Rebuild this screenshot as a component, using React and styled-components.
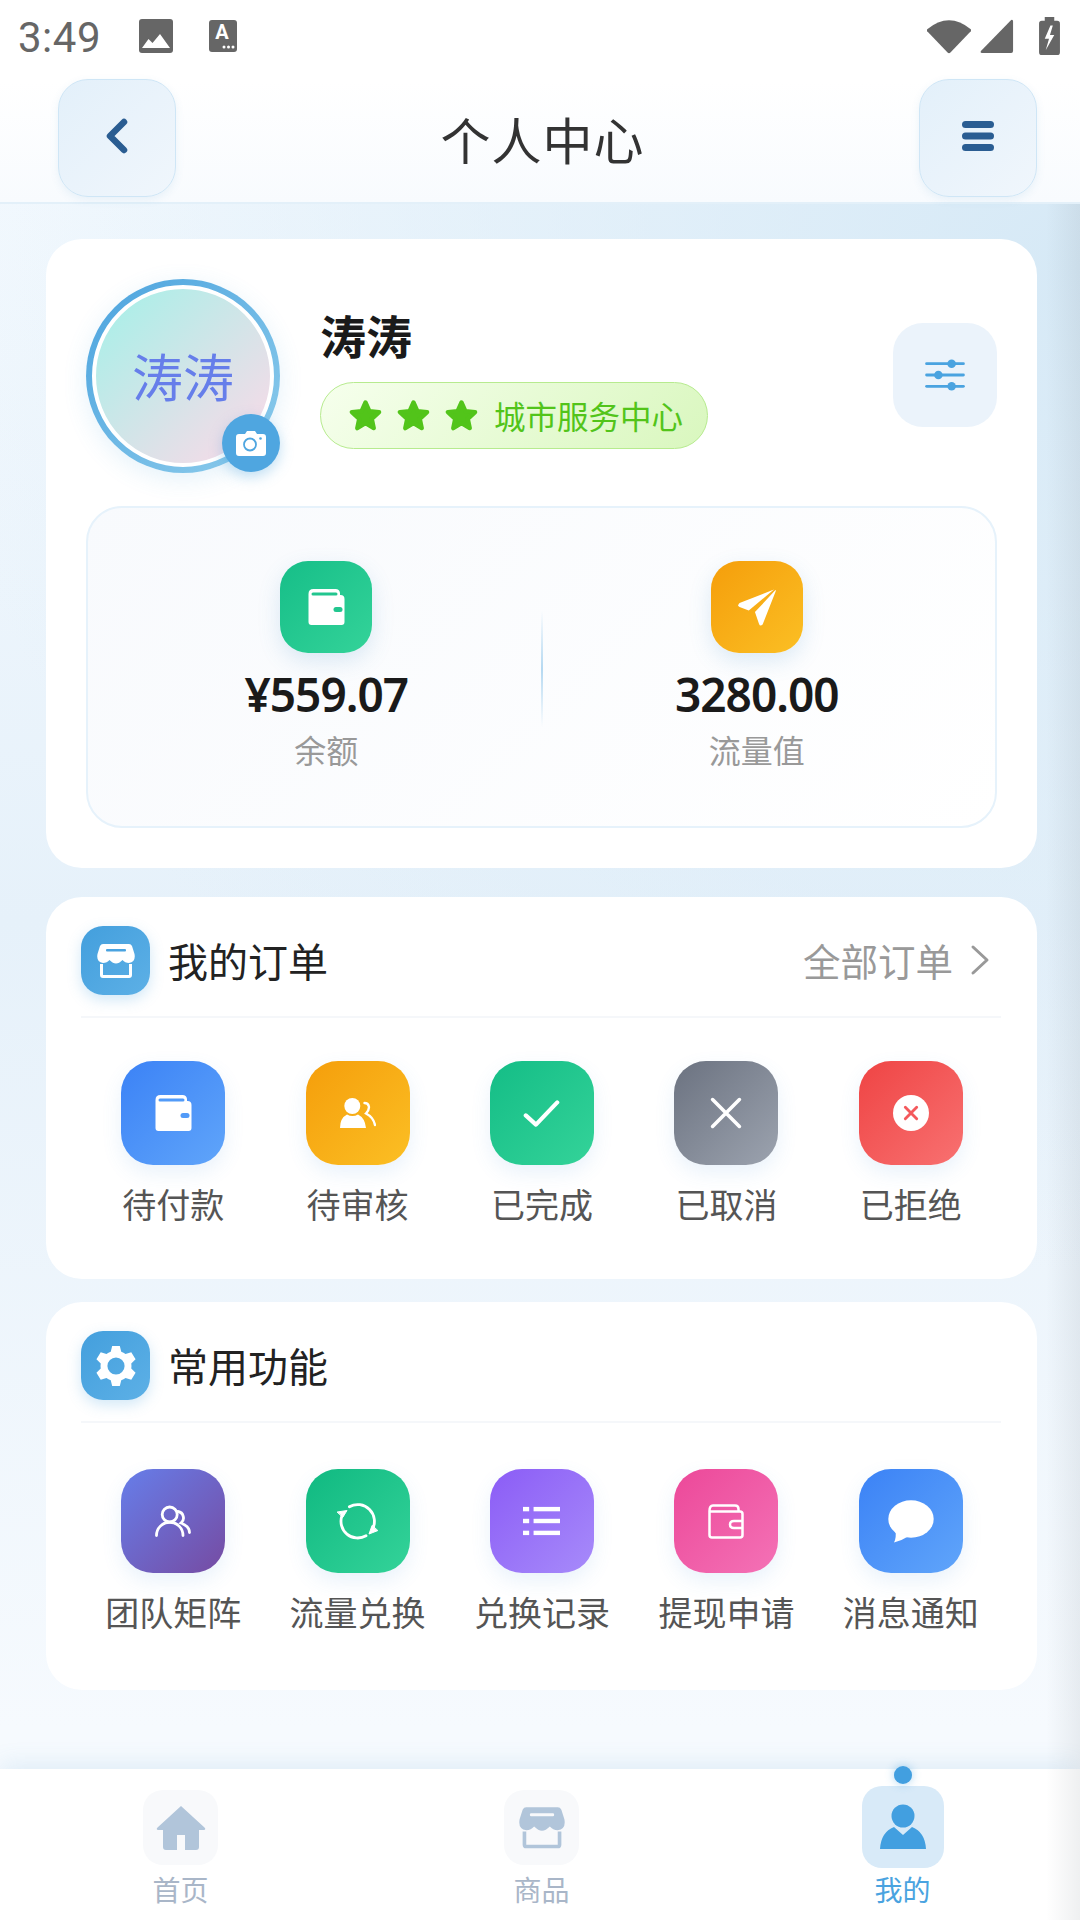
import React from 'react';
import styled, { createGlobalStyle } from 'styled-components';

const GlobalStyle = createGlobalStyle`
    html, body {
        margin: 0;
        padding: 0;
        background: #fff;
    }
    * {
        box-sizing: border-box;
    }
`;

const CJK = `"Noto Sans CJK SC", "Noto Sans", sans-serif`;

const Page = styled.div`
    position: relative;
    width: 1080px;
    height: 1920px;
    display: flex;
    flex-direction: column;
    overflow: hidden;
    font-family: ${CJK};
    background:
        radial-gradient(ellipse 1150px 1000px at 100% 14%, #d6e9f6 0%, rgba(214, 233, 246, 0) 100%),
        linear-gradient(180deg, #f3f9fe 10%, #e6f1fa 48%, #f6fafe 90%);
`;

const EdgeShade = styled.div`
    position: absolute;
    top: 204px;
    right: 0;
    bottom: 0;
    width: 34px;
    background: linear-gradient(90deg, rgba(120, 130, 140, 0) 0%, rgba(120, 130, 140, 0.12) 100%);
    pointer-events: none;
`;

const TopArea = styled.div`
    height: 204px;
    flex-shrink: 0;
    background: linear-gradient(180deg, #ffffff 0%, #ffffff 40%, #f8fbfe 100%);
    border-bottom: 2px solid #e3f0f9;
`;

const StatusBar = styled.div`
    height: 75px;
    display: flex;
    align-items: center;
    padding: 0 19px 3px 18px;
    color: #666;
`;

const Time = styled.span`
    font-family: Roboto, sans-serif;
    font-size: 42px;
    letter-spacing: 0.5px;
    margin: 2px 2px 0 0;
`;

const StatusLeft = styled.div`
    display: flex;
    align-items: center;
    gap: 36px;
    flex: 1;
`;

const StatusRight = styled.div`
    display: flex;
    align-items: center;
    gap: 8px;

    svg:last-child {
        margin-left: 16px;
    }
`;

const HeaderRow = styled.div`
    height: 118px;
    padding: 0 43px 0 58px;
    margin-top: 4px;
    display: flex;
    align-items: center;
    justify-content: space-between;
`;

const HeaderBtn = styled.div`
    width: 118px;
    height: 118px;
    padding-bottom: 4px;
    border-radius: 30px;
    border: 1px solid #cfe6f6;
    background: linear-gradient(135deg, #e3f0fa 0%, #f0f6fc 100%);
    box-shadow: 0 3px 8px rgba(74, 144, 200, 0.1);
    display: flex;
    align-items: center;
    justify-content: center;
`;

const Title = styled.h1`
    margin: 0;
    padding-right: 10px;
    font-size: 50px;
    font-weight: 400;
    color: #333;
    letter-spacing: 1px;
`;

const Content = styled.div`
    flex: 1;
    padding: 35px 43px 0 46px;
    display: flex;
    flex-direction: column;
`;

const Card = styled.div`
    background: #fff;
    border-radius: 36px;
    margin-bottom: ${p => p.$gap || 0}px;
`;

const ProfileCard = styled(Card)`
    height: 629px;
    padding: 40px;
`;

const ProfileRow = styled.div`
    display: flex;
    align-items: center;
    height: 194px;
`;

const Avatar = styled.div`
    position: relative;
    width: 194px;
    height: 194px;
    flex-shrink: 0;
    border-radius: 50%;
    padding: 6px;
    background: linear-gradient(135deg, #4ba3de 0%, #8fcdec 100%);
    box-shadow: 0 6px 24px rgba(74, 163, 222, 0.14);
    margin-right: 40px;
`;

const AvatarInner = styled.div`
    width: 100%;
    height: 100%;
    padding-bottom: 2px;
    border-radius: 50%;
    border: 4px solid #fff;
    background: linear-gradient(135deg, #aeeee8 12%, #eedde8 82%);
    display: flex;
    align-items: center;
    justify-content: center;
    font-size: 51px;
    color: #667eea;
`;

const CameraBadge = styled.div`
    position: absolute;
    right: 0;
    bottom: 1px;
    width: 58px;
    height: 58px;
    border-radius: 50%;
    background: #4fa6e0;
    box-shadow: 0 5px 14px rgba(74, 163, 222, 0.35);
    display: flex;
    align-items: center;
    justify-content: center;
`;

const ProfileInfo = styled.div`
    flex: 1;
    display: flex;
    flex-direction: column;
    align-items: flex-start;
    gap: 18px;
`;

const Name = styled.div`
    font-size: 46px;
    font-weight: 700;
    line-height: 60px;
    color: #1a1a1a;
`;

const LevelPill = styled.div`
    width: 388px;
    height: 67px;
    border-radius: 34px;
    border: 1px solid #b7eb8f;
    background: linear-gradient(135deg, #f6ffed 0%, #d9f7be 100%);
    display: flex;
    align-items: center;
    padding-left: 28px;
    gap: 16px;
    color: #52c41a;
    font-size: 31.500px;
`;

const Stars = styled.div`
    display: flex;
    gap: 15px;
`;

const SettingsBtn = styled.div`
    width: 104px;
    height: 104px;
    margin-bottom: 2px;
    border-radius: 30px;
    background: #ebf3fb;
    display: flex;
    align-items: center;
    justify-content: center;
`;

const StatBox = styled.div`
    height: 322px;
    margin-top: 33px;
    border: 2px solid #e6f2fb;
    border-radius: 36px;
    background: linear-gradient(135deg, #f8fafd 0%, #ffffff 100%);
    display: flex;
    align-items: stretch;
    padding: 53px 24px 0;
`;

const Stat = styled.div`
    flex: 1;
    display: flex;
    flex-direction: column;
    align-items: center;
`;

const StatIcon = styled.div`
    width: 92px;
    height: 92px;
    border-radius: 28px;
    background: ${p => p.$bg};
    box-shadow: 0 8px 22px rgba(74, 144, 200, 0.18);
    display: flex;
    align-items: center;
    justify-content: center;
`;

const Amount = styled.div`
    margin-top: 11px;
    font-family: "Noto Sans", sans-serif;
    font-size: 46px;
    line-height: 60px;
    font-weight: 600;
    color: #1a1a1a;
    letter-spacing: -1px;
`;

const StatLabel = styled.div`
    margin-top: 3px;
    font-size: 32px;
    line-height: 44px;
    color: #999;
`;

const StatDivider = styled.div`
    width: 2px;
    height: 116px;
    margin-top: 50px;
    background: linear-gradient(180deg, rgba(74, 163, 222, 0), rgba(74, 163, 222, 0.4), rgba(74, 163, 222, 0));
`;

const SectionCard = styled(Card)`
    height: ${p => p.$h}px;
    padding: 29px 36px 0 35px;
`;

const SectionHead = styled.div`
    height: 92px;
    display: flex;
    align-items: flex-start;
    border-bottom: 2px solid #f5f7fa;
`;

const SectionIcon = styled.div`
    width: 69px;
    height: 69px;
    border-radius: 22px;
    background: linear-gradient(135deg, #439fdd 0%, #5db0e6 100%);
    box-shadow: 0 5px 14px rgba(74, 163, 222, 0.25);
    display: flex;
    align-items: center;
    justify-content: center;
    margin-right: 18px;
`;

const SectionTitle = styled.div`
    flex: 1;
    font-size: 40px;
    line-height: 68px;
    color: #222;
`;

const AllLink = styled.div`
    display: flex;
    align-items: center;
    height: 67px;
    font-size: 37.500px;
    color: #999;
    gap: 17px;
    padding-right: 11px;
`;

const Grid = styled.div`
    display: grid;
    grid-template-columns: repeat(5, 1fr);
    margin-top: ${p => p.$top}px;
    margin-right: -2px;
`;

const GridItem = styled.div`
    display: flex;
    flex-direction: column;
    align-items: center;
`;

const GridIcon = styled.div`
    width: 104px;
    height: 104px;
    border-radius: 32px;
    background: ${p => p.$bg};
    box-shadow: 0 8px 20px rgba(74, 144, 220, 0.12);
    display: flex;
    align-items: center;
    justify-content: center;
`;

const GridLabel = styled.div`
    margin-top: 15px;
    font-size: 34px;
    line-height: 48px;
    color: #555;
    white-space: nowrap;
`;

const BottomNav = styled.div`
    position: relative;
    height: 151px;
    flex-shrink: 0;
    background: #fff;
    display: grid;
    grid-template-columns: repeat(3, 361px);
    box-shadow: 0 -6px 22px rgba(74, 144, 200, 0.12);
`;

const NavItem = styled.div`
    position: relative;
    display: flex;
    flex-direction: column;
    align-items: center;
    padding-top: ${p => (p.$active ? 17 : 21)}px;
`;

const NavIcon = styled.div`
    width: ${p => (p.$active ? 82 : 75)}px;
    height: ${p => (p.$active ? 82 : 75)}px;
    border-radius: 20px;
    background: ${p => (p.$active ? '#d8eaf8' : '#f8f9fb')};
    display: flex;
    align-items: center;
    justify-content: center;
`;

const NavLabel = styled.div`
    margin-top: ${p => (p.$active ? 1 : 4)}px;
    font-size: 28px;
    line-height: 40px;
    color: ${p => (p.$active ? '#4aa3e0' : '#a9b6c8')};
`;

const NavDot = styled.div`
    position: absolute;
    top: -3px;
    left: 50%;
    margin-left: -9px;
    width: 18px;
    height: 18px;
    border-radius: 50%;
    background: #429fe0;
    box-shadow: 0 0 10px rgba(66, 159, 224, 0.45);
`;

/* ---- icons ---- */

const ImageIcon = () => (
    <svg width="34" height="34" viewBox="0 0 34 34">
        <rect x="0" y="0" width="34" height="34" rx="3" fill="#666" />
        <path d="M3 29 L9.500 20 L13.500 24 L21 15 L31 29 Z" fill="#fff" />
    </svg>
);

const TextNote = () => (
    <svg width="28" height="32" viewBox="0 0 28 32">
        <rect x="0" y="0" width="28" height="32" rx="3" fill="#666" />
        <text x="13" y="19" fontFamily="Roboto, sans-serif" fontSize="20" fontWeight="700" fill="#fff" textAnchor="middle">A</text>
        <circle cx="15" cy="27" r="1.500" fill="#fff" />
        <circle cx="19.500" cy="27" r="1.500" fill="#fff" />
        <circle cx="24" cy="27" r="1.500" fill="#fff" />
    </svg>
);

const Wifi = () => (
    <svg width="46" height="36" viewBox="0 0 48 38">
        <path d="M1 12 Q24 -7 47 12 Q47.500 13 47 14 L25.500 36.500 Q24 38 22.500 36.500 L1 14 Q0.500 13 1 12 Z" fill="#666" />
    </svg>
);

const Signal = () => (
    <svg width="34" height="34" viewBox="0 0 36 36">
        <path d="M33 1 Q35 0 35 3 V34 Q35 36 33 36 H2 Q0 36 1 34 Z" fill="#666" />
    </svg>
);

const Battery = () => (
    <svg width="23" height="38" viewBox="0 0 22 40">
        <path d="M6 0 H16 V4 H19 Q22 4 22 7 V37 Q22 40 19 40 H3 Q0 40 0 37 V7 Q0 4 3 4 H6 Z" fill="#666" />
        <path d="M12 9 L6 23 H10.500 L7 35 L16 19 H11.500 L14.500 9 Z" fill="#fff" />
    </svg>
);

const BackChevron = () => (
    <svg width="24" height="36" viewBox="0 0 24 36">
        <path d="M19 4 L5 18 L19 32" fill="none" stroke="#2a5d92" strokeWidth="6.500" strokeLinecap="round" strokeLinejoin="round" />
    </svg>
);

const MenuBars = () => (
    <svg width="32" height="32" viewBox="0 0 32 32">
        <rect x="0" y="1" width="32" height="7" rx="3.500" fill="#2a5d92" />
        <rect x="0" y="12.500" width="32" height="7" rx="3.500" fill="#2a5d92" />
        <rect x="0" y="24" width="32" height="7" rx="3.500" fill="#2a5d92" />
    </svg>
);

const Camera = () => (
    <svg width="30" height="26" viewBox="0 0 30 26">
        <path d="M3 4 H9 L11 1 H19 L21 4 H27 Q30 4 30 7 V23 Q30 26 27 26 H3 Q0 26 0 23 V7 Q0 4 3 4 Z" fill="#fff" />
        <circle cx="14" cy="14.500" r="6" fill="none" stroke="#4fa6e0" strokeWidth="1.800" />
        <circle cx="24.500" cy="8.500" r="1.300" fill="#4fa6e0" />
    </svg>
);

const Star = () => (
    <svg width="33" height="32" viewBox="0 0 34 33">
        <path d="M17 3.500 L21 12.500 L31 13.500 L23.500 20.500 L25.500 30 L17 25 L8.500 30 L10.500 20.500 L3 13.500 L13 12.500 Z" fill="#52c41a" stroke="#52c41a" strokeWidth="4.500" strokeLinejoin="round" />
    </svg>
);

const Sliders = () => (
    <svg width="40" height="34" viewBox="0 0 42 36">
        <g stroke="#4aa3e0" strokeWidth="3" strokeLinecap="round">
            <line x1="1.500" y1="6" x2="40.500" y2="6" />
            <line x1="1.500" y1="18" x2="40.500" y2="18" />
            <line x1="1.500" y1="30" x2="40.500" y2="30" />
        </g>
        <circle cx="28" cy="6" r="4.500" fill="#4aa3e0" />
        <circle cx="14" cy="18" r="4.500" fill="#4aa3e0" />
        <circle cx="28" cy="30" r="4.500" fill="#4aa3e0" />
    </svg>
);

const WalletFill = ({ hole }) => (
    <svg width="37" height="36" viewBox="0 0 36 36">
        <path d="M0 5 Q0 0 5 0 H27 Q31 0 31.500 4 V6 H32 Q36 6 36 10 V33 Q36 36 33 36 H3 Q0 36 0 33 Z" fill="#fff" />
        <rect x="3" y="3.500" width="26" height="3" rx="1.500" fill={hole} />
        <rect x="25" y="18" width="9" height="5" rx="2.500" fill={hole} />
    </svg>
);

const Plane = () => (
    <svg width="38" height="37" viewBox="0 0 37 36">
        <path d="M35 0.500 L1.500 13.500 Q-1 16 1.500 17.500 L10.500 21 Z" fill="#fff" />
        <path d="M36.500 1 Q37 1 36.800 2 L24 34.500 Q21.500 37 20.500 34 L16.500 22.500 Z" fill="#fff" />
    </svg>
);

const StoreFill = ({ width, fill, bar }) => (
    <svg width={width} viewBox="0 0 38 35">
        <path d="M6 1 H32 Q34 1 35 3 L37.500 11 Q39 19 32 20 Q28 20 25.500 17 Q22 20.500 19 20.500 Q16 20.500 12.500 17 Q10 20 6 20 Q-1 19 0.500 11 L3 3 Q4 1 6 1 Z" fill={fill} />
        <rect x="9" y="6" width="20" height="2.500" rx="1" fill={bar} />
        <path d="M4.500 21 V32 Q4.500 33.500 6 33.500 H32 Q33.500 33.500 33.500 32 V21" fill="none" stroke={fill} strokeWidth="3" />
    </svg>
);

const GroupFill = () => (
    <svg width="36" height="31" viewBox="0 0 36 31">
        <circle cx="12.300" cy="8" r="8" fill="#fff" />
        <path d="M0 30 Q0 20 7 16.500 Q12.500 19.500 18 16.500 Q25 20 26 30 Z" fill="#fff" />
        <path d="M24.500 5 C29 5 31 10 26 15.500 C31 18 34 22 35 27" fill="none" stroke="#fff" strokeWidth="2.400" strokeLinecap="round" />
    </svg>
);

const Check = () => (
    <svg width="37" height="37" viewBox="0 0 40 40">
        <path d="M3 22 L14 32 L37 8" fill="none" stroke="#fff" strokeWidth="4.500" strokeLinecap="round" strokeLinejoin="round" />
    </svg>
);

const Cross = () => (
    <svg width="34" height="34" viewBox="0 0 38 38">
        <path d="M4 4 L34 34 M34 4 L4 34" fill="none" stroke="#fff" strokeWidth="4" strokeLinecap="round" />
    </svg>
);

const CrossCircle = () => (
    <svg width="36" height="36" viewBox="0 0 38 38">
        <circle cx="19" cy="19" r="19" fill="#fff" />
        <path d="M13 13 L25 25 M25 13 L13 25" fill="none" stroke="#f4595c" strokeWidth="3" strokeLinecap="round" />
    </svg>
);

const Gear = () => (
    <svg width="42" height="42" viewBox="0 0 44 44">
        <path fillRule="evenodd" d="M18 1 H26 L27.500 7 Q30 8 32 9.500 L38 7.500 L42.500 15 L38 19.500 Q38.400 22 38 24.500 L42.500 29 L38 36.500 L32 34.500 Q30 36 27.500 37 L26 43 H18 L16.500 37 Q14 36 12 34.500 L6 36.500 L1.500 29 L6 24.500 Q5.600 22 6 19.500 L1.500 15 L6 7.500 L12 9.500 Q14 8 16.500 7 Z M22 13 A9 9 0 1 0 22 31 A9 9 0 1 0 22 13 Z" fill="#fff" />
    </svg>
);

const GroupLine = () => (
    <svg width="36" height="32" viewBox="0 0 36 32" fill="none" stroke="#fff" strokeWidth="2.800" strokeLinecap="round">
        <circle cx="14.700" cy="9.500" r="7.500" />
        <path d="M1.500 30.500 A13.200 13.200 0 0 1 28 30.500" />
        <path d="M23 6.500 A6.500 6.500 0 0 1 26 18 C31 20 34.500 23 34.500 27.500" />
    </svg>
);

const Exchange = () => (
    <svg width="41" height="37" viewBox="0 0 41 37" fill="none" stroke="#fff" strokeWidth="2.800" strokeLinecap="round">
        <path d="M12.400 3.800 A16.700 16.700 0 0 1 35.200 26.600" />
        <path d="M29 32.800 A16.700 16.700 0 0 1 5 12.600" />
        <path d="M0.500 9 L10 7.500 L6 14 Z" fill="#fff" strokeWidth="1" strokeLinejoin="round" />
        <path d="M40.500 27.700 L32 31 L35 22.700 Z" fill="#fff" strokeWidth="1" strokeLinejoin="round" />
    </svg>
);

const ListIcon = () => (
    <svg width="37" height="32" viewBox="0 0 42 36" fill="#fff">
        <rect x="0" y="2" width="7" height="5" />
        <rect x="12" y="2" width="30" height="5" />
        <rect x="0" y="15.500" width="7" height="5" />
        <rect x="12" y="15.500" width="30" height="5" />
        <rect x="0" y="29" width="7" height="5" />
        <rect x="12" y="29" width="30" height="5" />
    </svg>
);

const WalletLine = () => (
    <svg width="36" height="35" viewBox="0 0 36 35" fill="none" stroke="#fff" strokeWidth="2.500" strokeLinejoin="round">
        <path d="M1.500 7 V31 Q1.500 33.500 4 33.500 H32 Q34.500 33.500 34.500 31 V10 Q34.500 7.500 32 7.500 H1.500" />
        <path d="M1.500 7 Q1.500 1.500 5 1.500 H27 Q30.500 1.500 30.500 5 V7.500" />
        <path d="M34.500 17 H26 Q22 17 22 20.500 Q22 24 26 24 H34.500" />
    </svg>
);

const Bubble = () => (
    <svg width="46" height="43" viewBox="0 0 46 43" fill="#fff">
        <ellipse cx="23" cy="19" rx="22.700" ry="18.700" />
        <path d="M7.500 31 Q8.500 38 6 42.500 Q13 41 20 36.500 Z" />
    </svg>
);

const Home = () => (
    <svg width="50" height="46" viewBox="0 0 50 46">
        <path fillRule="evenodd" d="M25 1 L49 23 Q50 25 47 25 H43 V42 Q43 45 40 45 H10 Q7 45 7 42 V25 H3 Q0 25 1 23 Z M21 30 V45 H29 V30 Z" fill="#b1c5da" />
    </svg>
);

const Person = () => (
    <svg width="46" height="46" viewBox="0 0 46 46">
        <circle cx="23" cy="12" r="11.500" fill="#429fe0" />
        <path d="M0 45 Q1 28 14 23 L23 31 L32 23 Q45 28 46 45 Z" fill="#429fe0" />
    </svg>
);

const balance = [
    { bg: 'linear-gradient(135deg, #16be88 0%, #34d399 100%)', icon: <WalletFill hole="#22c68f" />, value: '¥559.07', label: '余额' },
    { bg: 'linear-gradient(135deg, #f59e0b 0%, #fbbf24 100%)', icon: <Plane />, value: '3280.00', label: '流量值' },
];

const orders = [
    { bg: 'linear-gradient(135deg, #3b82f6 0%, #60a5fa 100%)', icon: <WalletFill hole="#529bf8" />, label: '待付款' },
    { bg: 'linear-gradient(135deg, #f59e0b 0%, #fbbf24 100%)', icon: <GroupFill />, label: '待审核' },
    { bg: 'linear-gradient(135deg, #14bd86 0%, #34d399 100%)', icon: <Check />, label: '已完成' },
    { bg: 'linear-gradient(135deg, #6b7280 0%, #9ca3af 100%)', icon: <Cross />, label: '已取消' },
    { bg: 'linear-gradient(135deg, #ef4444 0%, #f87171 100%)', icon: <CrossCircle />, label: '已拒绝' },
];

const tools = [
    { bg: 'linear-gradient(135deg, #667eea 0%, #764ba2 100%)', icon: <GroupLine />, label: '团队矩阵' },
    { bg: 'linear-gradient(135deg, #10b981 0%, #34d399 100%)', icon: <Exchange />, label: '流量兑换' },
    { bg: 'linear-gradient(135deg, #8b5cf6 0%, #a78bfa 100%)', icon: <ListIcon />, label: '兑换记录' },
    { bg: 'linear-gradient(135deg, #ec4899 0%, #f472b6 100%)', icon: <WalletLine />, label: '提现申请' },
    { bg: 'linear-gradient(135deg, #3b82f6 0%, #60a5fa 100%)', icon: <Bubble />, label: '消息通知' },
];

const App = () => {
    return (
        <Page>
            <GlobalStyle />
            <TopArea>
                <StatusBar>
                    <StatusLeft>
                        <Time>3:49</Time>
                        <ImageIcon />
                        <TextNote />
                    </StatusLeft>
                    <StatusRight>
                        <Wifi />
                        <Signal />
                        <Battery />
                    </StatusRight>
                </StatusBar>
                <HeaderRow>
                    <HeaderBtn><BackChevron /></HeaderBtn>
                    <Title>个人中心</Title>
                    <HeaderBtn><MenuBars /></HeaderBtn>
                </HeaderRow>
            </TopArea>

            <Content>
                <ProfileCard $gap={29}>
                    <ProfileRow>
                        <Avatar>
                            <AvatarInner>涛涛</AvatarInner>
                            <CameraBadge><Camera /></CameraBadge>
                        </Avatar>
                        <ProfileInfo>
                            <Name>涛涛</Name>
                            <LevelPill>
                                <Stars><Star /><Star /><Star /></Stars>
                                城市服务中心
                            </LevelPill>
                        </ProfileInfo>
                        <SettingsBtn><Sliders /></SettingsBtn>
                    </ProfileRow>
                    <StatBox>
                        <Stat>
                            <StatIcon $bg={balance[0].bg}>{balance[0].icon}</StatIcon>
                            <Amount>{balance[0].value}</Amount>
                            <StatLabel>{balance[0].label}</StatLabel>
                        </Stat>
                        <StatDivider />
                        <Stat>
                            <StatIcon $bg={balance[1].bg}>{balance[1].icon}</StatIcon>
                            <Amount>{balance[1].value}</Amount>
                            <StatLabel>{balance[1].label}</StatLabel>
                        </Stat>
                    </StatBox>
                </ProfileCard>

                <SectionCard $h={382} $gap={23}>
                    <SectionHead>
                        <SectionIcon><StoreFill width={38} fill="#fff" bar="#4aa3e0" /></SectionIcon>
                        <SectionTitle>我的订单</SectionTitle>
                        <AllLink>
                            全部订单
                            <svg width="20" height="32" viewBox="0 0 20 32">
                                <path d="M3 3 L17 16 L3 29" fill="none" stroke="#999" strokeWidth="3" strokeLinecap="round" strokeLinejoin="round" />
                            </svg>
                        </AllLink>
                    </SectionHead>
                    <Grid $top={43}>
                        {orders.map(item => (
                            <GridItem key={item.label}>
                                <GridIcon $bg={item.bg}>{item.icon}</GridIcon>
                                <GridLabel>{item.label}</GridLabel>
                            </GridItem>
                        ))}
                    </Grid>
                </SectionCard>

                <SectionCard $h={388}>
                    <SectionHead>
                        <SectionIcon><Gear /></SectionIcon>
                        <SectionTitle>常用功能</SectionTitle>
                    </SectionHead>
                    <Grid $top={46}>
                        {tools.map(item => (
                            <GridItem key={item.label}>
                                <GridIcon $bg={item.bg}>{item.icon}</GridIcon>
                                <GridLabel>{item.label}</GridLabel>
                            </GridItem>
                        ))}
                    </Grid>
                </SectionCard>
            </Content>

            <BottomNav>
                <NavItem>
                    <NavIcon><Home /></NavIcon>
                    <NavLabel>首页</NavLabel>
                </NavItem>
                <NavItem>
                    <NavIcon><StoreFill width={46} fill="#b1c5da" bar="#f8f9fb" /></NavIcon>
                    <NavLabel>商品</NavLabel>
                </NavItem>
                <NavItem $active>
                    <NavDot />
                    <NavIcon $active><Person /></NavIcon>
                    <NavLabel $active>我的</NavLabel>
                </NavItem>
            </BottomNav>
            <EdgeShade />
        </Page>
    );
};

export default App;
